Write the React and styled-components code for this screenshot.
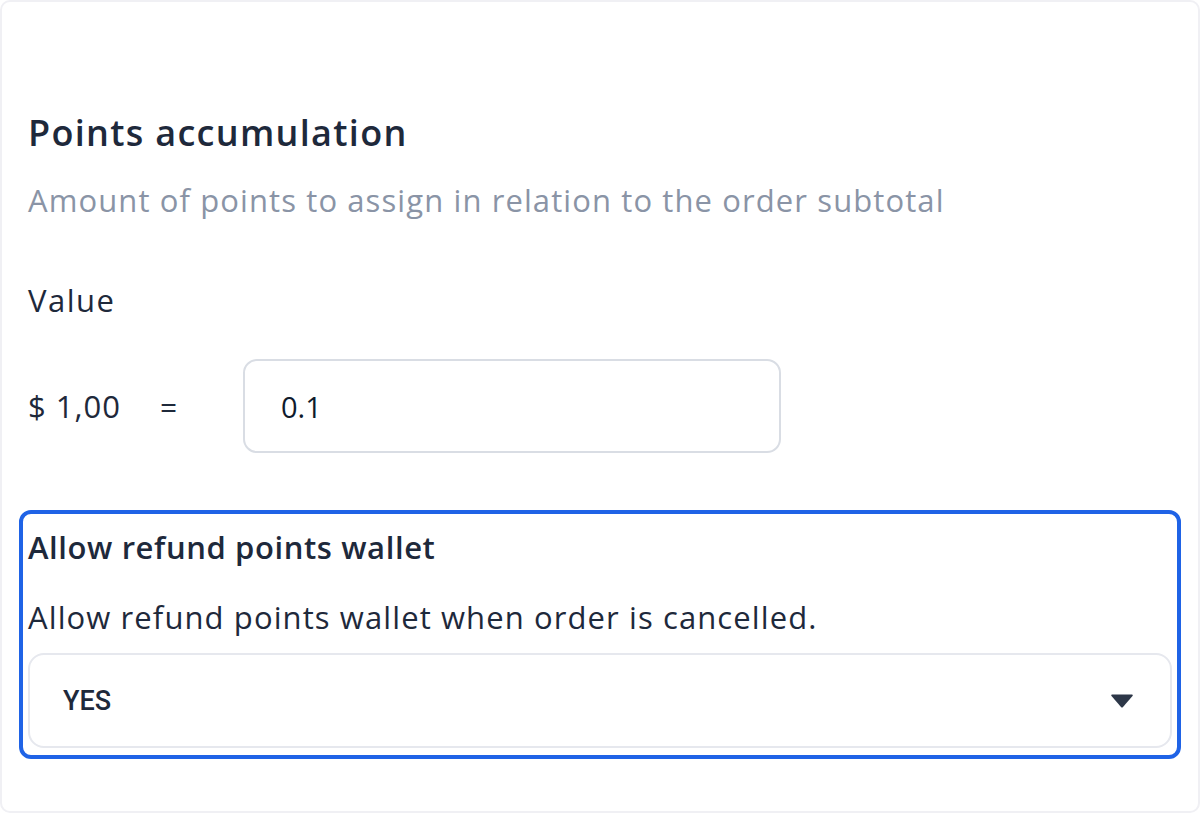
import React from 'react';
import styled, { createGlobalStyle } from 'styled-components';

const GlobalStyle = createGlobalStyle`
  html, body {
    margin: 0;
    padding: 0;
    background: #ffffff;
  }
  * {
    box-sizing: border-box;
  }
  body {
    font-family: "Open Sans", "Noto Sans", sans-serif;
    color: #1e293b;
  }
`;

const Card = styled.div`
  width: 1200px;
  height: 813px;
  border: 2px solid #f0f0f4;
  border-radius: 10px;
  padding: 111px 26px 0;
  background: #fff;
`;

const Title = styled.h2`
  margin: 0;
  font-size: 36px;
  line-height: 40px;
  font-weight: 600;
  letter-spacing: 1.3px;
  color: #1e293b;
`;

const Subtitle = styled.p`
  margin: 27px 0 0;
  font-size: 31px;
  line-height: 40px;
  letter-spacing: 1.1px;
  color: #8a94a6;
`;

const Label = styled.div`
  margin-top: 60px;
  font-size: 31px;
  line-height: 40px;
  letter-spacing: 1.5px;
  color: #1e293b;
`;

const ValueRow = styled.div`
  margin-top: 39px;
  display: flex;
  align-items: center;
  height: 94px;
`;

const Money = styled.span`
  font-size: 31px;
  letter-spacing: 1px;
  color: #1e293b;
  width: 132px;
`;

const Equals = styled.span`
  font-size: 30px;
  color: #1e293b;
  width: 83px;
`;

const Input = styled.div`
  width: 538px;
  height: 94px;
  border: 2px solid #d9dde4;
  border-radius: 14px;
  display: flex;
  align-items: center;
  padding-left: 36px;
  font-size: 29px;
  color: #0f1b2d;
`;

const FocusBox = styled.div`
  margin: 57px -9px 0;
  border: 4px solid #1f63e6;
  border-radius: 12px;
  padding: 15px 5px 7px;
`;

const FieldTitle = styled.div`
  font-size: 31px;
  line-height: 36px;
  font-weight: 600;
  letter-spacing: 0.6px;
  color: #1e293b;
`;

const FieldHint = styled.div`
  margin-top: 34px;
  font-size: 31px;
  line-height: 36px;
  letter-spacing: 1.1px;
  color: #1e293b;
`;

const Select = styled.div`
  margin-top: 18px;
  height: 95px;
  border: 2px solid #e6e8ee;
  border-radius: 16px;
  display: flex;
  align-items: center;
  justify-content: space-between;
  padding: 0 36px 0 33px;
  font-family: Roboto, "Noto Sans", sans-serif;
  font-size: 27px;
  font-weight: 500;
  color: #1e293b;
`;

const Caret = () => (
  <svg width="24" height="16" viewBox="0 0 24 16">
    <path d="M2 1.5 H22 Q23.5 1.5 22.5 3 L13 14 Q12 15 11 14 L1.5 3 Q0.5 1.5 2 1.5 Z" fill="#2d3748" />
  </svg>
);

export default function App() {
  return (
    <>
      <GlobalStyle />
      <Card>
        <Title>Points accumulation</Title>
        <Subtitle>Amount of points to assign in relation to the order subtotal</Subtitle>
        <Label>Value</Label>
        <ValueRow>
          <Money>$ 1,00</Money>
          <Equals>=</Equals>
          <Input>0.1</Input>
        </ValueRow>
        <FocusBox>
          <FieldTitle>Allow refund points wallet</FieldTitle>
          <FieldHint>Allow refund points wallet when order is cancelled.</FieldHint>
          <Select>
            <span>YES</span>
            <Caret />
          </Select>
        </FocusBox>
      </Card>
    </>
  );
}
